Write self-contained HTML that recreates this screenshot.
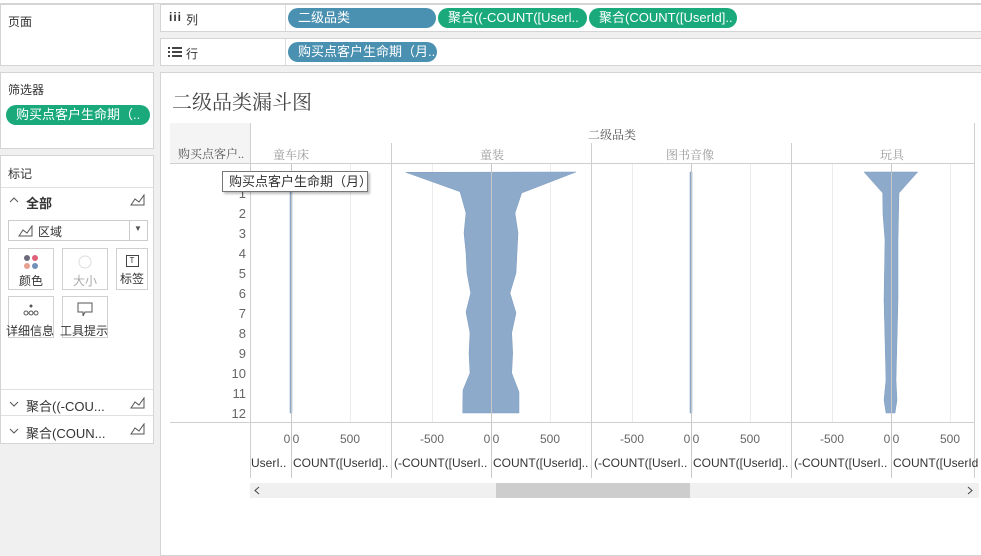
<!DOCTYPE html>
<html><head><meta charset="utf-8">
<style>
*{margin:0;padding:0;box-sizing:border-box}
body{width:981px;height:552px;overflow:hidden;background:#f0f0f0;font-family:"Liberation Sans","Noto Sans CJK SC",sans-serif;font-size:12px;color:#333;position:relative}
.a{position:absolute}
.p{position:absolute;background:#fff;border:1px solid #d4d4d4}
.pill{position:absolute;height:20px;border-radius:10px;color:#fff;font-size:13px;line-height:20px;padding-left:10px;white-space:nowrap;overflow:hidden}
.blue{background:#4a90b0}
.green{background:#19a97b}
.btn{position:absolute;width:46px;height:42px;border:1px solid #d0d0d0;background:#fff;text-align:center;font-size:12px}
.t{position:absolute;white-space:nowrap}
.serif{font-family:"Liberation Serif","Noto Serif CJK SC",serif}
</style></head><body>
<div class="a" style="left:0;top:0;width:981px;height:4px;background:#fff;border-bottom:1px solid #d4d4d4"></div>
<div class="p" style="left:0;top:4px;width:154px;height:62px"><div class="t" style="left:7px;top:8px">页面</div></div>
<div class="p" style="left:0;top:72px;width:154px;height:77px"><div class="t" style="left:7px;top:8px">筛选器</div>
<div class="pill green" style="left:5px;top:32px;width:144px;padding-left:10px">购买点客户生命期（..</div></div>
<div class="p" style="left:0;top:155px;width:154px;height:289px">
<div class="t" style="left:7px;top:9px">标记</div>
<div class="a" style="left:0;top:31px;width:152px;border-top:1px solid #e0e0e0"></div>
<svg class="a" style="left:8px;top:40px" width="10" height="8"><path d="M1 6 L5 2 L9 6" fill="none" stroke="#555"/></svg>
<div class="t" style="left:25px;top:37px;font-weight:bold;font-size:13px">全部</div>
<svg class="a" style="left:129px;top:38px" width="16" height="12"><path d="M1 11 L5 5 L9 8 L14 1 L14 11 Z" fill="none" stroke="#555"/></svg>
<div class="a" style="left:7px;top:64px;width:140px;height:21px;border:1px solid #ccc"></div>
<svg class="a" style="left:17px;top:69px" width="16" height="12"><path d="M1 11 L5 5 L9 8 L14 1 L14 11 Z" fill="none" stroke="#555"/></svg>
<div class="t" style="left:37px;top:67px">区域</div>
<div class="a" style="left:128px;top:65px;height:19px;border-left:1px solid #ccc"></div>
<div class="t" style="left:133px;top:68px;font-size:8px;color:#555">▼</div>
<div class="btn" style="left:7px;top:92px"><svg width="20" height="20" style="margin-top:4px"><circle cx="6" cy="5" r="3" fill="#6a6a7a"/><circle cx="14" cy="5" r="3" fill="#e0607a"/><circle cx="6" cy="13" r="3" fill="#e8a090"/><circle cx="14" cy="13" r="3" fill="#7090b8"/></svg><div style="margin-top:-4px">颜色</div></div>
<div class="btn" style="left:61px;top:92px;color:#aaa"><svg width="20" height="20" style="margin-top:4px"><circle cx="10" cy="9" r="6" fill="none" stroke="#ddd"/></svg><div style="margin-top:-4px">大小</div></div>
<div class="btn" style="left:115px;top:92px;width:32px"><div style="margin:6px auto 0;width:13px;height:12px;border:1px solid #444;font-size:8px;line-height:10px">T</div><div style="margin-top:3px">标签</div></div>
<div class="btn" style="left:7px;top:140px"><svg width="20" height="18" style="margin-top:4px"><circle cx="10" cy="5" r="1.5" fill="#555"/><circle cx="5" cy="12" r="2" fill="none" stroke="#555"/><circle cx="10" cy="12" r="2" fill="none" stroke="#555"/><circle cx="15" cy="12" r="2" fill="none" stroke="#555"/></svg><div style="margin-top:0;font-size:12px;margin-left:-3px;white-space:nowrap">详细信息</div></div>
<div class="btn" style="left:61px;top:140px"><svg width="20" height="18" style="margin-top:4px"><path d="M3 2 H17 V11 H10 L8 15 V11 H3 Z" fill="none" stroke="#555"/></svg><div style="margin-top:0;white-space:nowrap;margin-left:-3px">工具提示</div></div>
<div class="a" style="left:0;top:233px;width:152px;border-top:1px solid #e0e0e0"></div>
<svg class="a" style="left:8px;top:244px" width="10" height="8"><path d="M1 2 L5 6 L9 2" fill="none" stroke="#555"/></svg><div class="t" style="left:25px;top:240px;font-size:13px">聚合((-COU...</div>
<svg class="a" style="left:129px;top:241px" width="16" height="12"><path d="M1 11 L5 5 L9 8 L14 1 L14 11 Z" fill="none" stroke="#555"/></svg>
<div class="a" style="left:0;top:259px;width:152px;border-top:1px solid #e0e0e0"></div>
<svg class="a" style="left:8px;top:271px" width="10" height="8"><path d="M1 2 L5 6 L9 2" fill="none" stroke="#555"/></svg><div class="t" style="left:25px;top:267px;font-size:13px">聚合(COUN...</div>
<svg class="a" style="left:129px;top:267px" width="16" height="12"><path d="M1 11 L5 5 L9 8 L14 1 L14 11 Z" fill="none" stroke="#555"/></svg>
</div>
<div class="p" style="left:160px;top:4px;width:825px;height:28px">
<div class="t" style="left:8px;top:5px;font-weight:bold;letter-spacing:1px">iii</div><div class="t" style="left:25px;top:6px">列</div>
<div class="a" style="left:124px;top:0;height:26px;border-left:1px solid #ddd"></div>
<div class="pill blue" style="left:127px;top:3px;width:148px">二级品类</div>
<div class="pill green" style="left:277px;top:3px;width:149px">聚合((-COUNT([Userl..</div>
<div class="pill green" style="left:428px;top:3px;width:148px">聚合(COUNT([UserId]..</div>
</div>
<div class="p" style="left:160px;top:38px;width:825px;height:28px">
<svg class="a" style="left:7px;top:7px" width="14" height="12"><g stroke="#444" stroke-width="2"><path d="M0 2h2M4 2h10M0 6h2M4 6h10M0 10h2M4 10h10"/></g></svg>
<div class="t" style="left:25px;top:6px">行</div>
<div class="a" style="left:124px;top:0;height:26px;border-left:1px solid #ddd"></div>
<div class="pill blue" style="left:127px;top:3px;width:149px">购买点客户生命期（月..</div>
</div>
<div class="p" style="left:160px;top:72px;width:825px;height:484px"></div>
<div class="t serif" style="left:172px;top:86px;font-size:20px;color:#444">二级品类漏斗图</div>
<div class="a" style="left:170px;top:123px;width:80px;height:40px;background:#f4f4f4"></div>
<div class="t serif" style="left:178px;top:145px;font-size:12px;color:#555">购买点客户..</div>
<div class="t serif" style="left:588px;top:126px;color:#555">二级品类</div>
<div class="t serif" style="left:273px;top:146px;color:#999">童车床</div>
<div class="t serif" style="left:480px;top:146px;color:#999">童装</div>
<div class="t serif" style="left:666px;top:146px;color:#999">图书音像</div>
<div class="t serif" style="left:880px;top:146px;color:#999">玩具</div>
<svg class="a" style="left:0;top:0" width="981" height="552">
<g stroke="#cfcfcf" stroke-width="1">
<line x1="170" y1="163.5" x2="975" y2="163.5"/>
<line x1="170" y1="422.5" x2="975" y2="422.5"/>
<line x1="250.5" y1="123" x2="250.5" y2="478"/>
<line x1="391.5" y1="143" x2="391.5" y2="478"/>
<line x1="591.5" y1="143" x2="591.5" y2="478"/>
<line x1="791.5" y1="143" x2="791.5" y2="478"/>
<line x1="974.5" y1="123" x2="974.5" y2="478"/>
</g>
<g stroke="#ececec">
<line x1="350.5" y1="164" x2="350.5" y2="422"/>
<line x1="432.5" y1="164" x2="432.5" y2="422"/><line x1="550.5" y1="164" x2="550.5" y2="422"/>
<line x1="632.5" y1="164" x2="632.5" y2="422"/><line x1="750.5" y1="164" x2="750.5" y2="422"/>
<line x1="832.5" y1="164" x2="832.5" y2="422"/><line x1="950.5" y1="164" x2="950.5" y2="422"/>
</g>
<g fill="#8eaacb" stroke="#7f9dc0" stroke-width="0.5">
<polygon points="405.7,172.3 460,191.7 466,213 464,233 466,253 467,273 470.7,293 466,312 470,333 469,353 470,373 463,390 462.7,413 519,413 519,392 511.7,373 512.7,353 511.7,333 516,313 510,293 516,273 517,253 518,233 515,213 521.7,193 576,172"/>
<polygon points="864,172 882.7,193 883,215 885,240 884,300 886,380 884,400 886,413 895,413 897,400 896,380 898,300 898,240 899,193 917.7,172"/>
<rect x="290" y="172" width="2" height="241"/>
<rect x="690" y="172" width="2" height="241"/>
</g>
<g stroke="#c8c8c8"><line x1="291.5" y1="164" x2="291.5" y2="478"/><line x1="491.5" y1="164" x2="491.5" y2="478"/><line x1="691.5" y1="164" x2="691.5" y2="478"/><line x1="891.5" y1="164" x2="891.5" y2="478"/></g>
<g font-family="Liberation Sans" font-size="13" fill="#666" text-anchor="end">
<text x="246" y="218">2</text><text x="246" y="238">3</text><text x="246" y="258">4</text><text x="246" y="278">5</text><text x="246" y="298">6</text><text x="246" y="318">7</text><text x="246" y="338">8</text><text x="246" y="358">9</text><text x="246" y="378">10</text><text x="246" y="398">11</text><text x="246" y="418">12</text><text x="246" y="198">1</text>
</g>
<g font-family="Liberation Sans" font-size="12" fill="#666" text-anchor="middle">
<text x="287" y="443">0</text><text x="296" y="443">0</text><text x="350" y="443">500</text>
<text x="432" y="443">-500</text><text x="487" y="443">0</text><text x="496" y="443">0</text><text x="550" y="443">500</text>
<text x="632" y="443">-500</text><text x="687" y="443">0</text><text x="696" y="443">0</text><text x="750" y="443">500</text>
<text x="832" y="443">-500</text><text x="887" y="443">0</text><text x="896" y="443">0</text><text x="950" y="443">500</text>
</g>
<g font-family="Liberation Sans" font-size="12" fill="#333">
<text x="251" y="467">UserI..</text><text x="293" y="467">COUNT([UserId]..</text>
<text x="394" y="467">(-COUNT([UserI..</text><text x="493" y="467">COUNT([UserId]..</text>
<text x="594" y="467">(-COUNT([UserI..</text><text x="693" y="467">COUNT([UserId]..</text>
<text x="794" y="467">(-COUNT([UserI..</text><text x="893" y="467">COUNT([UserId</text>
</g>
<rect x="250" y="483" width="729" height="15" fill="#f0f0f0"/>
<rect x="496" y="483" width="194" height="15" fill="#cdcdcd"/>
<path d="M259 487 L255 490.5 L259 494" fill="none" stroke="#444"/>
<path d="M968 487 L972 490.5 L968 494" fill="none" stroke="#444"/>
</svg>
<div class="a" style="left:222px;top:171px;width:146px;height:21px;background:#fff;border:1px solid #777;box-shadow:2px 2px 2px rgba(0,0,0,.25);font-size:13px;line-height:19px;padding-left:6px;white-space:nowrap">购买点客户生命期（月）</div>
</body></html>
